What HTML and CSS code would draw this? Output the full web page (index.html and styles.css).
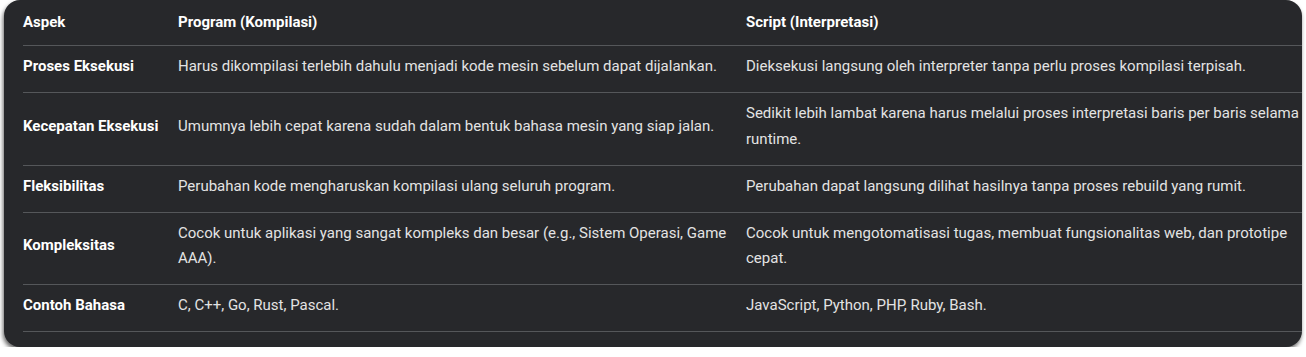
FILE: index.html
```html
<!DOCTYPE html>
<html lang="id">
<head>
<meta charset="utf-8">
<title>Program vs Script</title>
<link rel="stylesheet" href="styles.css">
</head>
<body>
<div class="card">
  <table class="cmp">
    <colgroup>
      <col class="c1"><col class="c2"><col class="c3">
    </colgroup>
    <thead>
      <tr><th>Aspek</th><th>Program (Kompilasi)</th><th>Script (Interpretasi)</th></tr>
    </thead>
    <tbody>
      <tr><td class="k">Proses Eksekusi</td><td>Harus dikompilasi terlebih dahulu menjadi kode mesin sebelum dapat dijalankan.</td><td>Dieksekusi langsung oleh interpreter tanpa perlu proses kompilasi terpisah.</td></tr>
      <tr><td class="k">Kecepatan Eksekusi</td><td>Umumnya lebih cepat karena sudah dalam bentuk bahasa mesin yang siap jalan.</td><td>Sedikit lebih lambat karena harus melalui proses interpretasi baris per baris selama runtime.</td></tr>
      <tr><td class="k">Fleksibilitas</td><td>Perubahan kode mengharuskan kompilasi ulang seluruh program.</td><td>Perubahan dapat langsung dilihat hasilnya tanpa proses rebuild yang rumit.</td></tr>
      <tr><td class="k">Kompleksitas</td><td>Cocok untuk aplikasi yang sangat kompleks dan besar (e.g., Sistem Operasi, Game AAA).</td><td>Cocok untuk mengotomatisasi tugas, membuat fungsionalitas web, dan prototipe cepat.</td></tr>
      <tr><td class="k">Contoh Bahasa</td><td>C, C++, Go, Rust, Pascal.</td><td>JavaScript, Python, PHP, Ruby, Bash.</td></tr>
    </tbody>
  </table>
</div>
</body>
</html>
```
FILE: styles.css
```css
html, body {
  margin: 0;
  padding: 0;
  background: #ffffff;
}
body {
  padding: 0 4px;
  font-family: Roboto, "Liberation Sans", sans-serif;
}
.card {
  width: 1298px;
  height: 347px;
  box-sizing: border-box;
  background: #27282b;
  border-radius: 16px;
  box-shadow: -1px 3px 4px rgba(0, 0, 0, 0.6);
  padding: 0 0 0 19px;
  overflow: hidden;
}
.cmp {
  border-collapse: collapse;
  table-layout: fixed;
  width: 1291px;
  font-size: 15px;
  line-height: 25.5px;
  color: #e3e3e3;
}
.c1 { width: 155px; }
.c2 { width: 568px; }
.c3 { width: 568px; }
.cmp th,
.cmp td {
  text-align: left;
  vertical-align: middle;
  padding: 8px 12px 12.5px 0;
  border-bottom: 1px solid #55575a;
}
.cmp th {
  font-weight: 700;
  color: #ffffff;
  padding-top: 9.5px;
  padding-bottom: 10px;
}
.cmp td.k {
  font-weight: 700;
  color: #ffffff;
}
```
